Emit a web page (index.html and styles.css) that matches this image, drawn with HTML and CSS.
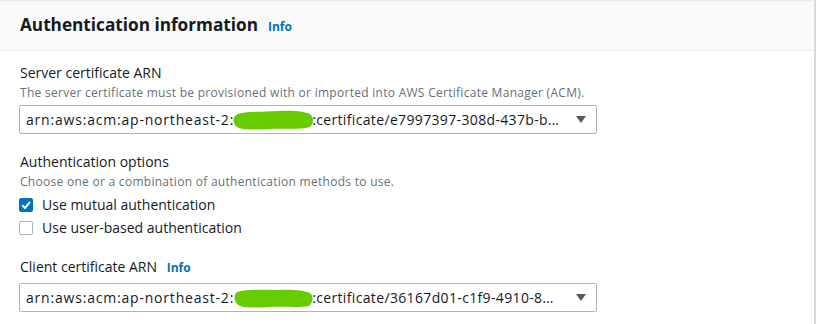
FILE: index.html
```html
<!DOCTYPE html>
<html>
<head>
<meta charset="utf-8">
<link rel="stylesheet" href="styles.css">
</head>
<body>
<div class="card">
  <div class="header">
    <h2 class="title">Authentication information</h2>
    <a class="info">Info</a>
  </div>
  <div class="content">
    <div class="field">
      <div class="label">Server certificate ARN</div>
      <div class="desc">The server certificate must be provisioned with or imported into AWS Certificate Manager (ACM).</div>
      <div class="select">
        <span class="value"><span class="pre">arn:aws:acm:ap-northeast-2:</span><span class="blobwrap"><svg class="blob" width="80" height="22" viewBox="0 0 80 22" preserveAspectRatio="none"><path d="M4 6 C10 2 30 3 45 2 C58 1 70 2 76 5 C80 8 80 15 76 18 C66 21 50 19 36 20 C22 21 10 21 5 18 C1 15 0 9 4 6 Z" fill="#66cc00"/></svg></span><span class="post">:certificate/e7997397-308d-437b-b…</span></span>
        <svg class="caret" width="10" height="7" viewBox="0 0 10 7"><path d="M0 0 H10 L5 7 Z" fill="#545b64"/></svg>
      </div>
    </div>
    <div class="field options">
      <div class="label">Authentication options</div>
      <div class="desc">Choose one or a combination of authentication methods to use.</div>
      <div class="checks">
        <label class="check"><span class="box checked"><svg width="14" height="14" viewBox="0 0 14 14"><path d="M3.2 7.2 L6 10 L11 4" fill="none" stroke="#fff" stroke-width="2"/></svg></span>Use mutual authentication</label>
        <label class="check"><span class="box"></span>Use user-based authentication</label>
      </div>
    </div>
    <div class="field client">
      <div class="label">Client certificate ARN <a class="info small">Info</a></div>
      <div class="select">
        <span class="value"><span class="pre">arn:aws:acm:ap-northeast-2:</span><span class="blobwrap"><svg class="blob" width="80" height="22" viewBox="0 0 80 22" preserveAspectRatio="none"><path d="M5 5 C14 2 30 3 44 3 C58 2 70 3 76 6 C80 9 79 16 75 19 C64 21 50 19 36 20 C22 21 11 21 6 18 C2 15 1 8 5 5 Z" fill="#66cc00"/></svg></span><span class="post">:certificate/36167d01-c1f9-4910-8…</span></span>
        <svg class="caret" width="10" height="7" viewBox="0 0 10 7"><path d="M0 0 H10 L5 7 Z" fill="#545b64"/></svg>
      </div>
    </div>
  </div>
</div>
</body>
</html>
```
FILE: styles.css
```css
* { box-sizing: border-box; }
html, body { margin: 0; padding: 0; background: #fff; }
body {
  font-family: "Open Sans", "Liberation Sans", sans-serif;
  color: #16191f;
  width: 817px;
  height: 324px;
  overflow: hidden;
}
.card {
  width: 816px;
  border-top: 1px solid #e9ebed;
  border-right: 2px solid #d5dbdb;
  height: 324px;
}
.header {
  display: flex;
  align-items: center;
  height: 50px;
  background: #fafafa;
  border-bottom: 1px solid #eaeded;
  padding-left: 20px;
}
.title {
  margin: 0;
  font-size: 17.2px;
  font-weight: 700;
  line-height: 24px;
  margin-top: -1px;
}
.info {
  color: #0073bb;
  font-size: 12px;
  font-weight: 700;
  margin-left: 10px;
  margin-top: 2px;
}
.info.small { margin-left: 6px; }
.content {
  padding: 11px 20px 0 20px;
  display: flex;
  flex-direction: column;
}
.label {
  font-size: 14px;
  line-height: 22px;
}
.desc {
  font-size: 12px;
  line-height: 18px;
  color: #687078;
  letter-spacing: 0.28px;
}
.select {
  margin-top: 3px;
  margin-left: -1px;
  width: 578px;
  height: 29px;
  border: 1px solid #aab7b8;
  border-radius: 2px;
  display: flex;
  align-items: center;
  justify-content: space-between;
  padding: 0 10px 0 6px;
}
.value {
  font-size: 14px;
  display: flex;
  align-items: center;
  white-space: nowrap;
  letter-spacing: 0.35px;
}
.pre { flex: none; letter-spacing: 0.8px; }
.blobwrap { width: 82px; height: 22px; display: flex; flex: none; margin-left: -2px; margin-right: -2px; }
.blob { width: 82px; height: 22px; }
.options { margin-top: 17px; }
.checks { margin-top: 2px; display: flex; flex-direction: column; }
.check {
  display: flex;
  align-items: center;
  font-size: 14px;
  line-height: 23px;
}
.box {
  width: 14px;
  height: 14px;
  border: 1px solid #aab7b8;
  border-radius: 2px;
  margin-left: -1px;
  margin-right: 9px;
  display: inline-flex;
}
.box.checked { background: #0073bb; border-color: #0073bb; }
.box.checked svg { margin: -1px; }
.client { margin-top: 17px; }
.client .select { margin-top: 4px; }
```
